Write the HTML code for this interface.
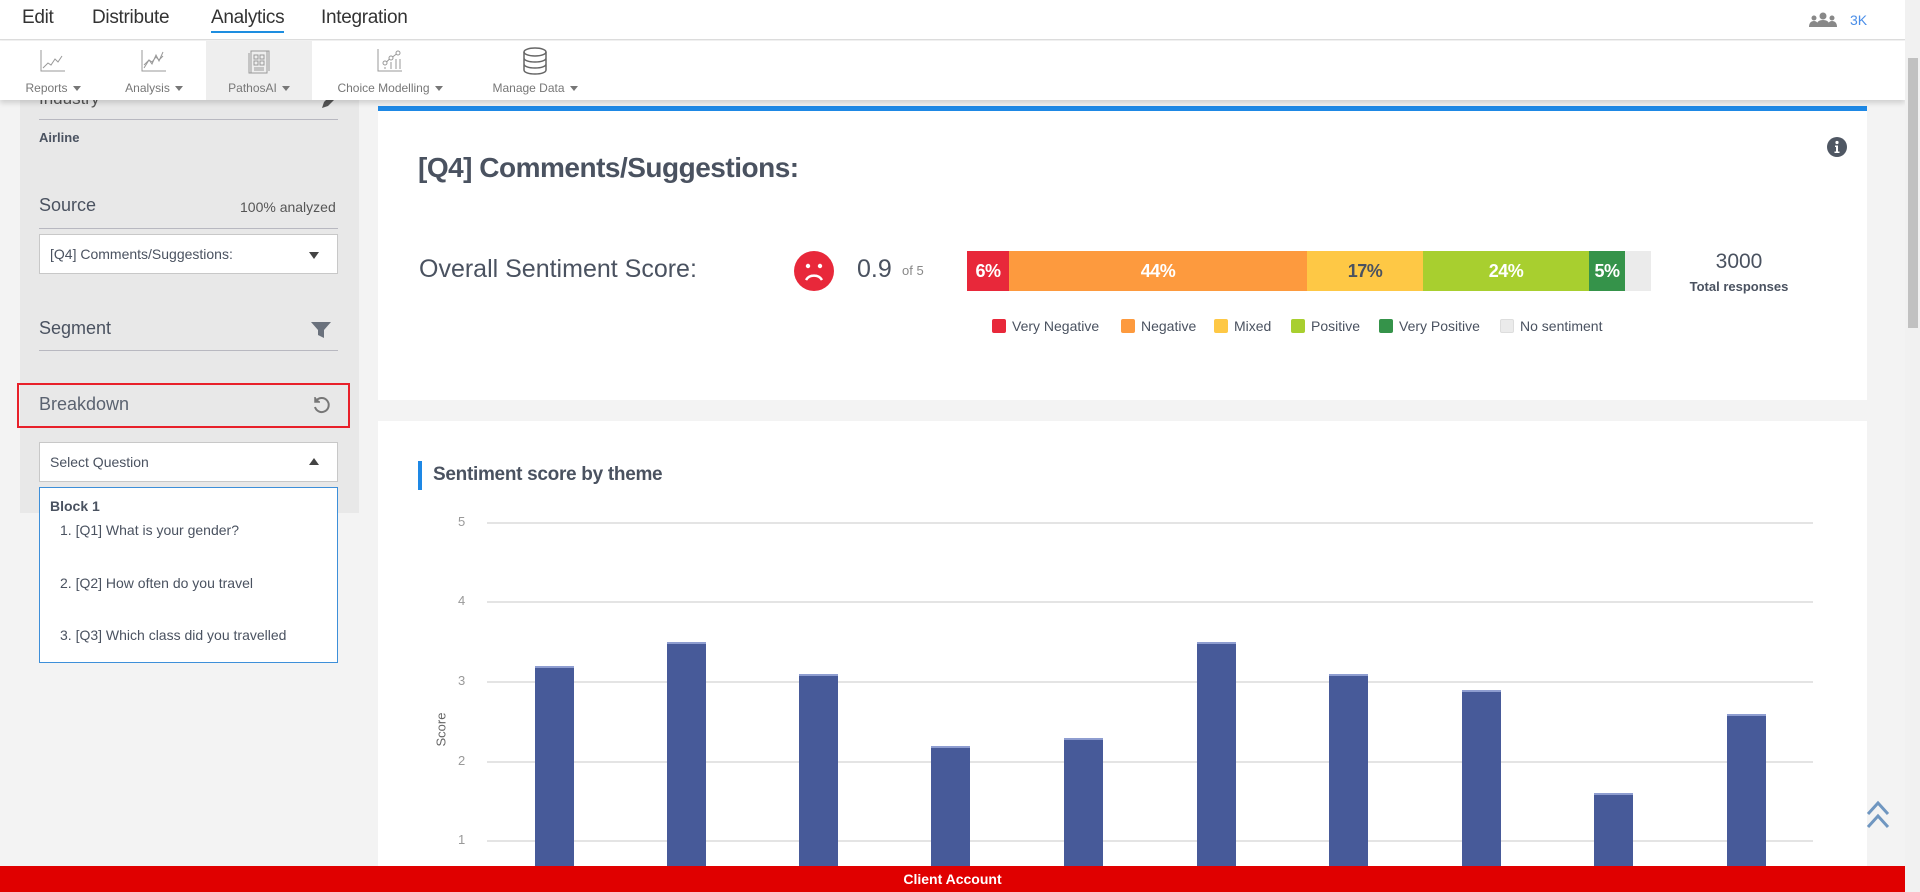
<!DOCTYPE html>
<html style="overflow:hidden;height:892px"><head><meta charset="utf-8">
<style>
*{box-sizing:border-box;margin:0;padding:0}
body{width:1920px;height:892px;overflow:hidden;background:#f3f3f3;font-family:"Liberation Sans",sans-serif;color:#4a5260;position:relative}
.abs{position:absolute}
.top{left:0;top:0;width:1905px;height:40px;background:#fff;border-bottom:1px solid #ddd}
.tab{position:absolute;top:7px;font-size:19px;color:#333;letter-spacing:-0.3px}
.tool{left:0;top:41px;width:1905px;height:59px;background:#fff;box-shadow:0 3px 5px rgba(0,0,0,.15);z-index:3}
.ti{position:absolute;top:0;height:59px;text-align:center;font-size:12px;color:#777}
.ti .lb{position:absolute;top:40px;left:0;right:0;white-space:nowrap}
.car{display:inline-block;width:0;height:0;border-left:4px solid transparent;border-right:4px solid transparent;border-top:5px solid #777;margin-left:5px;vertical-align:middle}
.side{left:20px;top:100px;width:339px;height:413px;background:#e8e8e8}
.line{position:absolute;left:39px;width:299px;height:1px;background:#b8b8c0}
.sel{position:absolute;left:39px;width:299px;height:40px;background:#fff;border:1px solid #c8c8c8;font-size:14px;color:#4a5260;padding:11px 10px}
.card{background:#fff;position:absolute}
.bar{position:absolute;top:251px;height:40px;color:#fff;font-weight:bold;font-size:18px;text-align:center;line-height:40px;letter-spacing:-0.5px}
.lg{position:absolute;top:318px;font-size:14px;color:#4a5260;white-space:nowrap}
.lg i{display:inline-block;width:14px;height:14px;vertical-align:-2px;margin-right:6px;border-radius:2px}
.grid{position:absolute;left:487px;width:1326px;height:2px;background:#e4e4e4}
.yl{position:absolute;left:458px;font-size:13px;color:#999}
.b{position:absolute;width:39px;bottom:26px;background:#475a99;border-top:2px solid #8e9dd0}
</style></head><body>
<div class="abs top">
 <div class="tab" style="left:22px">Edit</div>
 <div class="tab" style="left:92px">Distribute</div>
 <div class="tab" style="left:211px;border-bottom:2px solid #1e8ee0;padding-bottom:2px">Analytics</div>
 <div class="tab" style="left:321px">Integration</div>
 <svg class="abs" style="left:1809px;top:12px" width="28" height="16" viewBox="0 0 28 16"><circle cx="14" cy="4" r="3.5" fill="#888"/><path d="M7 15c0-5 3-7 7-7s7 2 7 7z" fill="#888"/><circle cx="5" cy="6" r="2.5" fill="#888"/><path d="M0 15c0-4 2-6 5-6s4 2 4 6z" fill="#888"/><circle cx="23" cy="6" r="2.5" fill="#888"/><path d="M19 15c0-4 1-6 4-6s5 2 5 6z" fill="#888"/></svg>
 <div class="abs" style="left:1850px;top:12px;font-size:14px;color:#4a8ee8">3K</div>
</div>
<div class="abs tool">
 <div class="ti" style="left:18px;width:70px"><svg style="margin-top:8px" width="28" height="24" viewBox="0 0 28 24" fill="none" stroke="#999" stroke-width="1"><path d="M2 1v21h24"/><path d="M4 19l5-5 3 2 4-6 3 3 4-6"/></svg><div class="lb">Reports<span class="car"></span></div></div>
 <div class="ti" style="left:118px;width:72px"><svg style="margin-top:8px" width="28" height="24" viewBox="0 0 28 24" fill="none" stroke="#999" stroke-width="1"><path d="M2 1v21h24"/><path d="M4 19l5-8 3 4 4-9 3 6 4-9"/><path d="M4 16l5-5 3 2 4-5 3 3 4-4"/></svg><div class="lb">Analysis<span class="car"></span></div></div>
 <div class="ti" style="left:206px;width:106px;background:#eee"><svg style="margin-top:8px" width="24" height="26" viewBox="0 0 24 26" fill="none" stroke="#999" stroke-width="1"><rect x="4" y="2" width="16" height="22"/><path d="M2 4v20h2M20 2h2v20"/><rect x="7" y="6" width="4" height="4"/><rect x="13" y="6" width="4" height="4"/><rect x="7" y="12" width="4" height="4"/><rect x="13" y="12" width="4" height="4"/><path d="M7 19h10M7 21h10"/></svg><div class="lb">PathosAI<span class="car"></span></div></div>
 <div class="ti" style="left:330px;width:120px"><svg style="margin-top:7px" width="28" height="26" viewBox="0 0 28 26" fill="none" stroke="#999" stroke-width="1"><path d="M2 1v22h24"/><circle cx="9" cy="15" r="2"/><circle cx="15" cy="10" r="2"/><circle cx="22" cy="5" r="2"/><path d="M10.5 14l3-3M16.5 9l4-3M15 14v7M20 11v10M24 11v10M9 19v2"/></svg><div class="lb">Choice Modelling<span class="car"></span></div></div>
 <div class="ti" style="left:480px;width:110px"><svg style="margin-top:6px" width="26" height="28" viewBox="0 0 26 28" fill="none" stroke="#666" stroke-width="1.5"><ellipse cx="13" cy="5" rx="11" ry="4"/><path d="M2 5v18c0 2.5 5 4 11 4s11-1.5 11-4V5M2 11c0 2.5 5 4 11 4s11-1.5 11-4M2 17c0 2.5 5 4 11 4s11-1.5 11-4"/></svg><div class="lb">Manage Data<span class="car"></span></div></div>
</div>

<div class="abs side"></div>
<div class="abs" style="left:39px;top:89px;font-size:17px;color:#555">Industry</div>
<svg class="abs" style="left:320px;top:94px" width="16" height="16" viewBox="0 0 16 16"><path d="M2 14l2-6 8-8 4 4-8 8z" fill="#555"/></svg>
<div class="line" style="top:119px"></div>
<div class="abs" style="left:39px;top:130px;font-size:13px;font-weight:bold;color:#4a5260">Airline</div>
<div class="abs" style="left:39px;top:195px;font-size:18px;color:#4a5260">Source</div>
<div class="abs" style="left:240px;top:199px;font-size:14px;color:#555">100% analyzed</div>
<div class="line" style="top:228px"></div>
<div class="sel" style="top:234px">[Q4] Comments/Suggestions:<span class="abs" style="right:18px;top:17px;border-left:5px solid transparent;border-right:5px solid transparent;border-top:7px solid #444"></span></div>
<div class="abs" style="left:39px;top:318px;font-size:18px;color:#4a5260">Segment</div>
<svg class="abs" style="left:311px;top:322px" width="20" height="16" viewBox="0 0 20 16"><path d="M0 0h20l-7 8v8l-6-3V8z" fill="#6a717c"/></svg>
<div class="line" style="top:350px"></div>
<div class="abs" style="left:17px;top:383px;width:333px;height:45px;border:2px solid #e8202a"></div>
<div class="abs" style="left:39px;top:394px;font-size:18px;color:#5a6270">Breakdown</div>
<svg class="abs" style="left:312px;top:395px" width="20" height="20" viewBox="0 0 20 20" fill="none" stroke="#777" stroke-width="2"><path d="M4 6a7 7 0 1 1-1 6"/><path d="M3 2v5h5" stroke-width="1.5" fill="#777"/></svg>
<div class="sel" style="top:442px">Select Question<span class="abs" style="right:18px;top:15px;border-left:5px solid transparent;border-right:5px solid transparent;border-bottom:7px solid #444"></span></div>
<div class="abs" style="left:39px;top:487px;width:299px;height:176px;background:#fff;border:1px solid #3d8fd9;font-size:14px;color:#4a5260">
 <div class="abs" style="left:10px;top:10px;font-weight:bold">Block 1</div>
 <div class="abs" style="left:20px;top:34px">1. [Q1] What is your gender?</div>
 <div class="abs" style="left:20px;top:87px">2. [Q2] How often do you travel</div>
 <div class="abs" style="left:20px;top:139px">3. [Q3] Which class did you travelled</div>
</div>

<div class="card" style="left:378px;top:106px;width:1489px;height:294px;border-top:5px solid #1e88e5">
 <svg class="abs" style="left:1449px;top:26px" width="20" height="20" viewBox="0 0 20 20"><circle cx="10" cy="10" r="10" fill="#4f5763"/><circle cx="10" cy="5.5" r="1.6" fill="#fff"/><path d="M8 8.5h3v6h1.5v1.5h-5v-1.5h1.5v-4.5h-1z" fill="#fff"/></svg>
</div>
<div class="abs" style="left:418px;top:152px;font-size:28px;font-weight:bold;color:#4a5260;letter-spacing:-0.5px">[Q4] Comments/Suggestions:</div>
<div class="abs" style="left:419px;top:255px;font-size:25px;color:#4a5260">Overall Sentiment Score:</div>
<svg class="abs" style="left:794px;top:251px" width="40" height="40" viewBox="0 0 40 40"><circle cx="20" cy="20" r="20" fill="#e8283a"/><circle cx="14" cy="15" r="2.2" fill="#fff"/><circle cx="26" cy="15" r="2.2" fill="#fff"/><path d="M12 29a9 8 0 0 1 16 0" fill="none" stroke="#fff" stroke-width="2.5"/></svg>
<div class="abs" style="left:857px;top:255px;font-size:25px;color:#4a5260">0.9</div>
<div class="abs" style="left:902px;top:263px;font-size:13px;color:#888">of 5</div>
<div class="bar" style="left:967px;width:42px;background:#e8283a">6%</div>
<div class="bar" style="left:1009px;width:298px;background:#fd9a3e">44%</div>
<div class="bar" style="left:1307px;width:116px;background:#fec845;color:#4a5260">17%</div>
<div class="bar" style="left:1423px;width:166px;background:#a8cf2f">24%</div>
<div class="bar" style="left:1589px;width:36px;background:#35934a">5%</div>
<div class="bar" style="left:1625px;width:26px;background:#ebebeb"></div>
<div class="abs" style="left:1700px;width:78px;text-align:center;top:250px;font-size:21px;color:#4a5260">3000</div>
<div class="abs" style="left:1680px;width:118px;text-align:center;top:279px;font-size:13px;font-weight:bold;color:#4a5260">Total responses</div>
<div class="lg" style="left:992px"><i style="background:#e8283a"></i>Very Negative</div>
<div class="lg" style="left:1121px"><i style="background:#fd9a3e"></i>Negative</div>
<div class="lg" style="left:1214px"><i style="background:#fec845"></i>Mixed</div>
<div class="lg" style="left:1291px"><i style="background:#a8cf2f"></i>Positive</div>
<div class="lg" style="left:1379px"><i style="background:#35934a"></i>Very Positive</div>
<div class="lg" style="left:1500px"><i style="background:#ebebeb;border:1px solid #ddd"></i>No sentiment</div>

<div class="card" style="left:378px;top:421px;width:1489px;height:471px"></div>
<div class="abs" style="left:418px;top:461px;width:4px;height:29px;background:#1e88e5"></div>
<div class="abs" style="left:433px;top:464px;font-size:19px;font-weight:bold;color:#4a5260;letter-spacing:-0.3px">Sentiment score by theme</div>
<div class="grid" style="top:522px"></div><div class="yl" style="top:514px">5</div>
<div class="grid" style="top:601px"></div><div class="yl" style="top:593px">4</div>
<div class="grid" style="top:681px"></div><div class="yl" style="top:673px">3</div>
<div class="grid" style="top:761px"></div><div class="yl" style="top:753px">2</div>
<div class="grid" style="top:840px"></div><div class="yl" style="top:832px">1</div>
<div class="abs" style="left:424px;top:722px;font-size:13px;color:#666;transform:rotate(-90deg)">Score</div>
<div class="b" style="left:535px;top:666px"></div>
<div class="b" style="left:667px;top:642px"></div>
<div class="b" style="left:799px;top:674px"></div>
<div class="b" style="left:931px;top:746px"></div>
<div class="b" style="left:1064px;top:738px"></div>
<div class="b" style="left:1197px;top:642px"></div>
<div class="b" style="left:1329px;top:674px"></div>
<div class="b" style="left:1462px;top:690px"></div>
<div class="b" style="left:1594px;top:793px"></div>
<div class="b" style="left:1727px;top:714px"></div>

<svg class="abs" style="left:1866px;top:800px" width="24" height="30" viewBox="0 0 24 30" fill="none" stroke="#6f96c0" stroke-width="3"><path d="M2 14L12 3l10 11M2 27l10-11 10 11"/></svg>
<div class="abs" style="left:1905px;top:0;width:15px;height:892px;background:#f1f1f1;z-index:5"></div>
<div class="abs" style="left:1908px;top:58px;width:10px;height:270px;background:#c1c1c1;z-index:6"></div>
<div class="abs" style="left:0;top:866px;width:1905px;height:26px;background:#e00000;color:#fff;font-weight:bold;font-size:14px;text-align:center;line-height:26px;z-index:5">Client Account</div>
</body></html>
